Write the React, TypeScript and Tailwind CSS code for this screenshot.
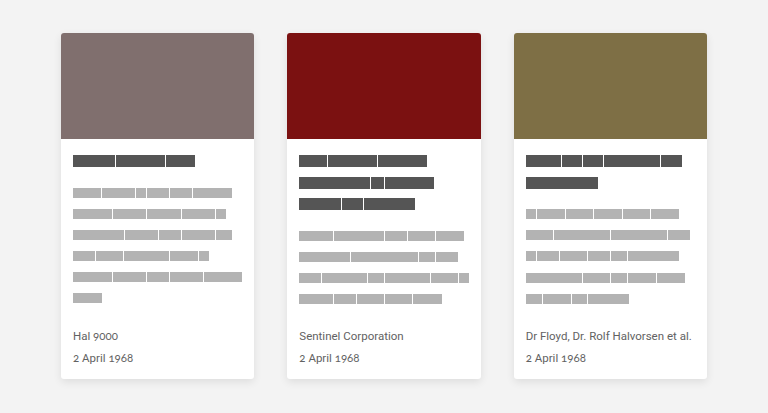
import React from "react";

type Story = {
  color: string;
  title: number[][];
  body: number[][];
  author: string;
  date: string;
};

const stories: Story[] = [
  {
    color: "bg-[#806f6e]",
    title: [[42, 49, 29]],
    body: [
      [28, 33, 10, 22, 22, 39],
      [39, 33, 34, 33, 10],
      [51, 33, 22, 33, 16],
      [22, 27, 45, 28, 10],
      [39, 33, 22, 34, 38],
      [29],
    ],
    author: "Hal 9000",
    date: "2 April 1968",
  },
  {
    color: "bg-[#7b1111]",
    title: [
      [28, 49, 49],
      [71, 13, 49],
      [42, 21, 51],
    ],
    body: [
      [34, 50, 22, 27, 28],
      [51, 67, 16, 22],
      [22, 45, 16, 45, 27, 10],
      [34, 22, 27, 27, 29],
    ],
    author: "Sentinel Corporation",
    date: "2 April 1968",
  },
  {
    color: "bg-[#7e6f45]",
    title: [[35, 20, 20, 56, 21], [72]],
    body: [
      [10, 28, 27, 28, 27, 28],
      [27, 56, 56, 22],
      [10, 22, 27, 22, 16, 51],
      [56, 27, 16, 28, 28],
      [16, 28, 15, 41],
    ],
    author: "Dr Floyd, Dr. Rolf Halvorsen et al.",
    date: "2 April 1968",
  },
];

// Figures are set in a face with old-style numerals; letters stay in Roboto.
function Figures({ text }: { text: string }) {
  const parts = text.split(/(\d+)/);
  return (
    <>
      {parts.map((p, i) =>
        /^\d+$/.test(p) ? (
          <span key={i} className="oldstyle-nums" style={{ fontFamily: "Lato, 'Open Sans', sans-serif" }}>
            {p}
          </span>
        ) : (
          <React.Fragment key={i}>{p}</React.Fragment>
        )
      )}
    </>
  );
}

function Words({ widths, tone }: { widths: number[]; tone: "dark" | "light" }) {
  return (
    <div className={tone === "dark" ? "flex gap-px h-[12px]" : "flex gap-px h-[10px]"}>
      {widths.map((w, i) => (
        <span
          key={i}
          className={tone === "dark" ? "block h-full bg-[#555555]" : "block h-full bg-[#b3b3b3]"}
          style={{ width: w }}
        />
      ))}
    </div>
  );
}

function Card({ story }: { story: Story }) {
  return (
    <article className="flex h-[346px] flex-col overflow-hidden rounded-[3px] bg-white shadow-[0_3px_8px_rgba(0,0,0,0.09)]">
      <div className={`h-[106px] shrink-0 ${story.color}`} />
      <div className="flex flex-1 flex-col px-[12px] pt-[16px] pb-[10.5px]">
        <div className="flex flex-col gap-[9.5px]">
          {story.title.map((line, i) => (
            <Words key={i} widths={line} tone="dark" />
          ))}
        </div>
        <div className="mt-[20.5px] flex flex-col gap-[11.2px]">
          {story.body.map((line, i) => (
            <Words key={i} widths={line} tone="light" />
          ))}
        </div>
        <div className="mt-auto whitespace-nowrap text-[11.5px] leading-[21px] text-[#626262]">
          <p>
            <Figures text={story.author} />
          </p>
          <p>
            <Figures text={story.date} />
          </p>
        </div>
      </div>
    </article>
  );
}

export default function App() {
  return (
    <div
      className="min-h-[413px] w-full bg-[#f3f3f3] pt-[33px]"
      style={{ fontFamily: "Roboto, 'Liberation Sans', sans-serif" }}
    >
      <div className="mx-auto grid w-[646px] grid-cols-3 gap-[33px]">
        {stories.map((s, i) => (
          <Card key={i} story={s} />
        ))}
      </div>
    </div>
  );
}
